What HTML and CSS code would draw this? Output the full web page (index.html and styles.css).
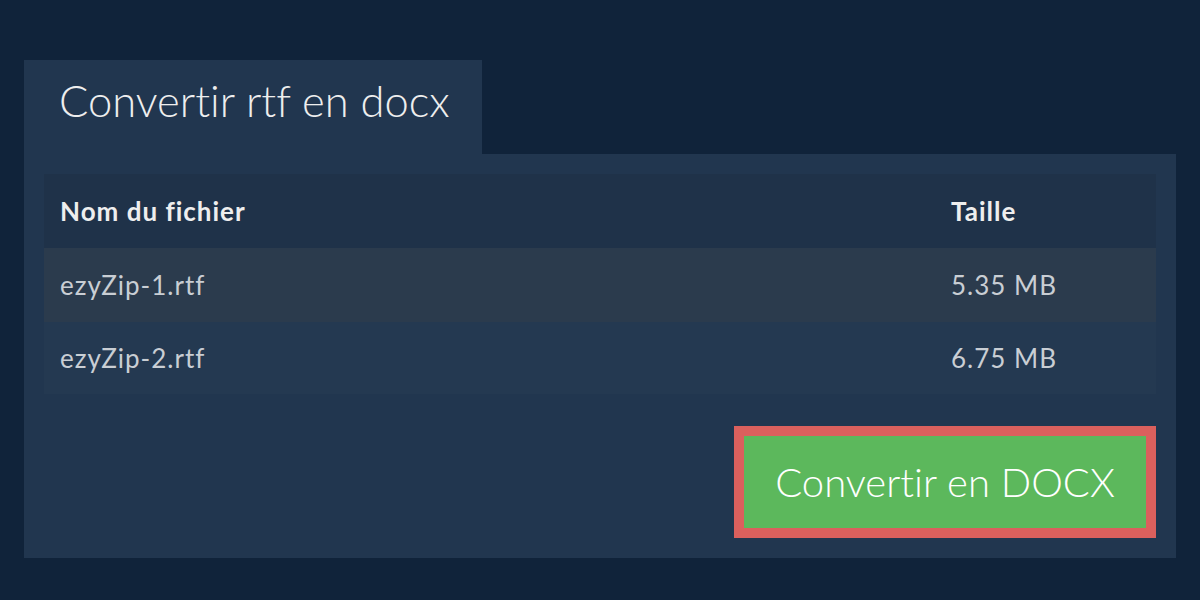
FILE: index.html
```html
<!DOCTYPE html>
<html lang="fr">
<head>
<meta charset="utf-8">
<title>Convertir rtf en docx</title>
<link rel="stylesheet" href="styles.css">
</head>
<body>
<main class="page">
  <div class="tab"><h1 class="tab-title">Convertir rtf en docx</h1></div>
  <section class="panel">
    <div class="table">
      <div class="row head">
        <div class="cell">Nom du fichier</div>
        <div class="cell">Taille</div>
      </div>
      <div class="row odd">
        <div class="cell">ezyZip-1.rtf</div>
        <div class="cell">5.35 MB</div>
      </div>
      <div class="row even">
        <div class="cell">ezyZip-2.rtf</div>
        <div class="cell">6.75 MB</div>
      </div>
    </div>
    <div class="actions">
      <button class="convert">Convertir en DOCX</button>
    </div>
  </section>
</main>
</body>
</html>
```

FILE: styles.css
```css
html, body {
  margin: 0;
  padding: 0;
  background: #10233a;
  font-family: Lato, "Open Sans", sans-serif;
}
.page {
  padding: 60px 24px 0 24px;
}
.tab {
  width: 458px;
  height: 94px;
  background: #21364f;
  box-sizing: border-box;
  padding-left: 35px;
  display: flex;
  align-items: center;
}
.tab-title {
  margin: 0;
  font-size: 43.5px;
  font-weight: 300;
  color: #eeeeee;
  line-height: 1;
  padding-bottom: 12px;
  font-variant-ligatures: none;
}
.panel {
  background: #21364f;
  padding: 20px;
}
.table {
  display: flex;
  flex-direction: column;
}
.row {
  display: grid;
  grid-template-columns: 891px 1fr;
  height: 73px;
  align-items: center;
  font-size: 26px;
  letter-spacing: 1px;
}
.row.head {
  height: 74px;
  background: #1f3249;
  color: #eeeeee;
  font-weight: 700;
}
.row.odd {
  background: #2b3b4d;
  color: #c9ced4;
  height: 74px;
}
.row.even {
  background: #243951;
  color: #c9ced4;
  height: 72px;
}
.cell {
  padding-left: 16px;
}
.actions {
  display: flex;
  justify-content: flex-end;
  padding-top: 32px;
}
.convert {
  width: 422px;
  height: 112px;
  box-sizing: border-box;
  border: 10px solid #db605d;
  background: #5cb85c;
  color: #ffffff;
  font-family: Lato, "Open Sans", sans-serif;
  font-size: 40px;
  font-weight: 300;
  padding: 0;
  cursor: pointer;
  font-variant-ligatures: none;
}
```
